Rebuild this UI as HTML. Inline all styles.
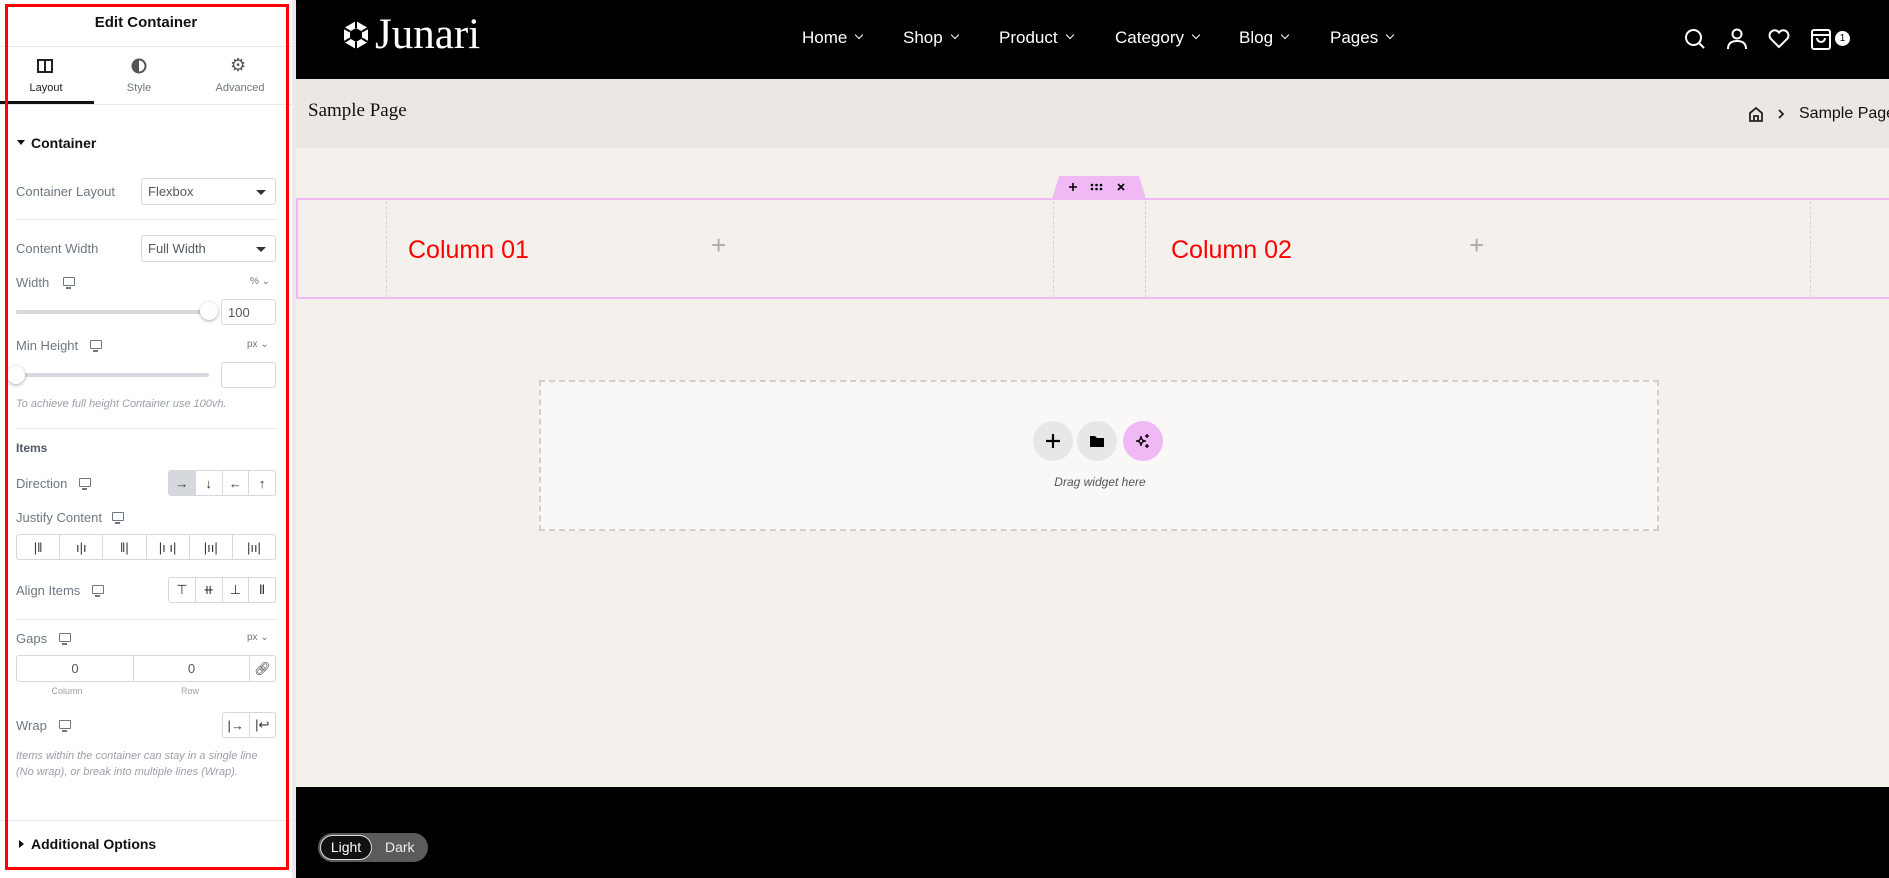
<!DOCTYPE html>
<html><head><meta charset="utf-8"><style>
*{box-sizing:border-box;margin:0;padding:0}
body{width:1889px;height:878px;overflow:hidden;position:relative;background:#f4f1ed;font-family:"Liberation Sans",sans-serif}
.a{position:absolute;white-space:nowrap}
#panel{left:0;top:0;width:292px;height:878px;background:#fff}
#gut{left:292px;top:0;width:4px;height:878px;background:#eceae8}
.red{left:5px;top:4px;width:284px;height:866px;border:3px solid #f00}
.lbl{font-size:13px;color:#6d7882}
.ln{height:1px;background:#e6e8ea;left:16px;width:260px}
.sel{border:1px solid #d5d8dc;border-radius:3px;font-size:13px;color:#515962;padding:5px 6px;background:#fff}
.sel:after{content:"";position:absolute;right:9px;top:11px;border:5px solid transparent;border-top:5px solid #333;border-bottom:0}
.inp{border:1px solid #d5d8dc;border-radius:3px;font-size:13px;color:#515962;background:#fff}
.grp{display:flex;border:1px solid #d5d8dc;border-radius:3px;overflow:hidden;background:#fff}
.grp div{flex:1;border-left:1px solid #d5d8dc;display:flex;align-items:center;justify-content:center;font-size:13px;color:#333}
.grp div:first-child{border-left:0}
.mon{width:12px;height:9px;border:1.5px solid #6d7882;border-radius:1px}
.mon:after{content:"";position:absolute;left:2px;top:9px;width:5px;height:1.5px;background:#6d7882}
.it{font-style:italic;font-size:11px;color:#9aa0a6}
.nav{color:#fff;font-size:17px;top:28px}
.nav:after{content:"";display:inline-block;width:5px;height:5px;border-right:1.6px solid #fff;border-bottom:1.6px solid #fff;transform:rotate(45deg);margin-left:9px;position:relative;top:-5px}
.dash{border-left:1px dashed #d2d2d2;top:201px;height:97px}
.col{color:#f00;font-size:25px;top:236px}
.plus{color:#a9abae;font-size:26px;top:230px}
.circ{width:40px;height:40px;border-radius:50%;background:#e6e7e8;top:421px;display:flex;align-items:center;justify-content:center}
</style></head><body>
<div class="a" id="panel"></div><div class="a" id="gut"></div>
<div class="a" style="left:0;top:14px;width:292px;text-align:center;font-weight:bold;font-size:15px;color:#111">Edit Container</div>
<div class="a" style="left:0;top:46px;width:292px;height:1px;background:#e6e8ea"></div>
<svg class="a" style="left:37px;top:59px" width="16" height="14"><rect x="1" y="1" width="14" height="12" fill="none" stroke="#222" stroke-width="2"/><line x1="8" y1="1" x2="8" y2="13" stroke="#222" stroke-width="2"/></svg>
<div class="a" style="left:0;top:82px;width:92px;text-align:center;font-size:11px;color:#222">Layout</div>
<svg class="a" style="left:131px;top:58px" width="16" height="16"><circle cx="8" cy="8" r="6.5" fill="none" stroke="#555" stroke-width="2"/><path d="M8 1.5A6.5 6.5 0 0 0 8 14.5Z" fill="#555"/></svg>
<div class="a" style="left:93px;top:82px;width:92px;text-align:center;font-size:11px;color:#6d7882">Style</div>
<div class="a" style="left:230px;top:55px;font-size:18px;color:#555">⚙</div>
<div class="a" style="left:195px;top:82px;width:90px;text-align:center;font-size:11px;color:#6d7882">Advanced</div>
<div class="a" style="left:0;top:101px;width:94px;height:3px;background:#111"></div>
<div class="a" style="left:0;top:104px;width:292px;height:1px;background:#e6e8ea"></div>
<div class="a" style="left:17px;top:140px;border:4px solid transparent;border-top:5px solid #111;border-bottom:0"></div>
<div class="a" style="left:31px;top:135px;font-weight:bold;font-size:14px;color:#111">Container</div>
<div class="a lbl" style="left:16px;top:184px">Container Layout</div>
<div class="a sel" style="left:141px;top:178px;width:135px;height:27px">Flexbox</div>
<div class="a ln" style="top:219px"></div>
<div class="a lbl" style="left:16px;top:241px">Content Width</div>
<div class="a sel" style="left:141px;top:235px;width:135px;height:27px">Full Width</div>
<div class="a lbl" style="left:16px;top:275px">Width</div><div class="a mon" style="left:63px;top:277px"></div>
<div class="a" style="left:250px;top:276px;font-size:10px;color:#6d7882">%&nbsp;⌄</div>
<div class="a" style="left:16px;top:310px;width:195px;height:4px;background:#d5d8dc;border-radius:2px"></div>
<div class="a" style="left:200px;top:302px;width:18px;height:18px;border-radius:50%;background:#fff;box-shadow:0 1px 3px rgba(0,0,0,.35)"></div>
<div class="a inp" style="left:221px;top:299px;width:55px;height:26px;padding:5px 6px">100</div>
<div class="a lbl" style="left:16px;top:338px">Min Height</div><div class="a mon" style="left:90px;top:340px"></div>
<div class="a" style="left:247px;top:339px;font-size:10px;color:#6d7882">px&nbsp;⌄</div>
<div class="a" style="left:16px;top:373px;width:193px;height:4px;background:#d5d8dc;border-radius:2px"></div>
<div class="a" style="left:7px;top:366px;width:18px;height:18px;border-radius:50%;background:#fff;box-shadow:0 1px 3px rgba(0,0,0,.35)"></div>
<div class="a inp" style="left:221px;top:362px;width:55px;height:26px"></div>
<div class="a it" style="left:16px;top:398px">To achieve full height Container use 100vh.</div>
<div class="a ln" style="top:428px"></div>
<div class="a" style="left:16px;top:441px;font-size:12px;font-weight:bold;color:#515962">Items</div>
<div class="a lbl" style="left:16px;top:476px">Direction</div><div class="a mon" style="left:79px;top:478px"></div>
<div class="a grp" style="left:168px;top:470px;width:108px;height:26px"><div style="background:#d5d8dc">→</div><div>↓</div><div>←</div><div>↑</div></div>
<div class="a lbl" style="left:16px;top:510px">Justify Content</div><div class="a mon" style="left:112px;top:512px"></div>
<div class="a grp" style="left:16px;top:534px;width:260px;height:26px;font-size:10px"><div>|‖</div><div>ı|ı</div><div>‖|</div><div>|ı ı|</div><div>|ıı|</div><div>|ıı|</div></div>
<div class="a lbl" style="left:16px;top:583px">Align Items</div><div class="a mon" style="left:92px;top:585px"></div>
<div class="a grp" style="left:168px;top:577px;width:108px;height:26px"><div>⊤</div><div>⧺</div><div>⊥</div><div>Ⅱ</div></div>
<div class="a ln" style="top:619px"></div>
<div class="a lbl" style="left:16px;top:631px">Gaps</div><div class="a mon" style="left:59px;top:633px"></div>
<div class="a" style="left:247px;top:632px;font-size:10px;color:#6d7882">px&nbsp;⌄</div>
<div class="a grp" style="left:16px;top:655px;width:260px;height:27px"><div style="flex:0 0 116px;color:#515962">0</div><div style="flex:0 0 116px;color:#515962">0</div><div>🔗︎</div></div>
<div class="a" style="left:40px;top:686px;width:54px;text-align:center;font-size:9px;color:#9aa0a6">Column</div>
<div class="a" style="left:163px;top:686px;width:54px;text-align:center;font-size:9px;color:#9aa0a6">Row</div>
<div class="a lbl" style="left:16px;top:718px">Wrap</div><div class="a mon" style="left:59px;top:720px"></div>
<div class="a grp" style="left:222px;top:712px;width:54px;height:26px"><div>|→</div><div>|↩</div></div>
<div class="a it" style="left:16px;top:748px;line-height:16px">Items within the container can stay in a single line<br>(No wrap), or break into multiple lines (Wrap).</div>
<div class="a" style="left:0;top:820px;width:292px;height:1px;background:#e6e8ea"></div>
<div class="a" style="left:19px;top:840px;border:4px solid transparent;border-left:5px solid #111;border-right:0"></div>
<div class="a" style="left:31px;top:836px;font-weight:bold;font-size:14px;color:#111">Additional Options</div>
<div class="a red"></div>
<!-- header -->
<div class="a" style="left:296px;top:0;width:1593px;height:79px;background:#000"></div>
<svg class="a" style="left:342px;top:20px" width="28" height="30" viewBox="0 0 28 30"><polygon points="14,1 26,8 26,22 14,29 2,22 2,8" fill="#fff"/><polygon points="14,8 20,11.5 20,18.5 14,22 8,18.5 8,11.5" fill="#000"/><path d="M14 1V8M26 8L20 11.5M26 22L20 18.5M14 29V22M2 22L8 18.5M2 8L8 11.5" stroke="#000" stroke-width="2"/></svg>
<div class="a" style="left:375px;top:10px;font-family:'Liberation Serif',serif;font-size:43px;color:#fff">Junari</div>
<div class="a nav" style="left:802px">Home</div><div class="a nav" style="left:903px">Shop</div><div class="a nav" style="left:999px">Product</div><div class="a nav" style="left:1115px">Category</div><div class="a nav" style="left:1239px">Blog</div><div class="a nav" style="left:1330px">Pages</div>
<svg class="a" style="left:1684px;top:28px" width="22" height="22" fill="none" stroke="#fff" stroke-width="2"><circle cx="9.5" cy="9.5" r="7.5"/><path d="M15 15l5 5"/></svg>
<svg class="a" style="left:1727px;top:28px" width="20" height="22" fill="none" stroke="#fff" stroke-width="2"><circle cx="10" cy="6" r="4.5"/><path d="M1 21c0-6 4-8 9-8s9 2 9 8"/></svg>
<svg class="a" style="left:1768px;top:29px" width="22" height="20" fill="none" stroke="#fff" stroke-width="2"><path d="M11 18L2.5 9.5A5 5 0 0 1 11 3.5A5 5 0 0 1 19.5 9.5Z"/></svg>
<svg class="a" style="left:1811px;top:28px" width="20" height="22" fill="none" stroke="#fff" stroke-width="2"><rect x="1" y="2" width="18" height="19" rx="2"/><path d="M1 7h18M6 10a4 4 0 0 0 8 0"/></svg>
<div class="a" style="left:1835px;top:31px;width:15px;height:15px;border-radius:50%;background:#fff;color:#000;font-size:10px;text-align:center;line-height:15px">1</div>
<!-- breadcrumb -->
<div class="a" style="left:296px;top:79px;width:1593px;height:69px;background:#ebe8e4"></div>
<div class="a" style="left:308px;top:100px;font-family:'Liberation Serif',serif;font-size:19px;color:#111">Sample Page</div>
<svg class="a" style="left:1748px;top:106px" width="16" height="16" fill="none" stroke="#222" stroke-width="1.8"><path d="M2 7L8 2l6 5v8H2Z M6 15v-5h4v5"/></svg>
<svg class="a" style="left:1777px;top:108px" width="8" height="12" fill="none" stroke="#222" stroke-width="1.8"><path d="M2 2l4 4-4 4"/></svg>
<div class="a" style="left:1799px;top:105px;font-size:16px;color:#111">Sample Page</div>
<!-- container -->
<div class="a" style="left:296px;top:198px;width:1593px;height:101px;border-top:2px solid #f0b8f5;border-bottom:2px solid #f0b8f5;border-left:2px solid #f0b8f5"></div>
<svg class="a" style="left:1052px;top:176px" width="94" height="23"><path d="M7 0H87L94 23H0Z" fill="#f0b8f5"/><path d="M17 11h8M21 7v8" stroke="#000" stroke-width="1.6"/><g fill="#000"><circle cx="40" cy="9" r="1.3"/><circle cx="44.5" cy="9" r="1.3"/><circle cx="49" cy="9" r="1.3"/><circle cx="40" cy="13" r="1.3"/><circle cx="44.5" cy="13" r="1.3"/><circle cx="49" cy="13" r="1.3"/></g><path d="M66 8l6 6M72 8l-6 6" stroke="#000" stroke-width="1.6"/></svg>
<div class="a dash" style="left:386px"></div><div class="a dash" style="left:1053px"></div><div class="a dash" style="left:1145px"></div><div class="a dash" style="left:1810px"></div>
<div class="a col" style="left:408px">Column 01</div><div class="a plus" style="left:711px">+</div>
<div class="a col" style="left:1171px">Column 02</div><div class="a plus" style="left:1469px">+</div>
<!-- drop zone -->
<div class="a" style="left:539px;top:380px;width:1120px;height:151px;border:2px dashed #d0d0d0;background:#f9f8f6"></div>
<div class="a circ" style="left:1033px"><svg width="16" height="16"><path d="M8 1v14M1 8h14" stroke="#000" stroke-width="2.2"/></svg></div>
<div class="a circ" style="left:1077px"><svg width="16" height="14"><path d="M1 2h5l2 2h7v9H1Z" fill="#000"/></svg></div>
<div class="a circ" style="left:1123px;background:#f0b8f5"><svg width="18" height="18"><path d="M7 4Q7 9 2 9Q7 9 7 14Q7 9 12 9Q7 9 7 4Z" fill="none" stroke="#000" stroke-width="1.3"/><path d="M13 2v4M11 4h4M13 12v4M11 14h4" stroke="#000" stroke-width="1.3"/></svg></div>
<div class="a" style="left:1000px;top:475px;width:200px;text-align:center;font-style:italic;font-size:12px;color:#555">Drag widget here</div>
<!-- footer -->
<div class="a" style="left:296px;top:787px;width:1593px;height:91px;background:#000"></div>
<div class="a" style="left:318px;top:833px;width:110px;height:29px;border-radius:15px;background:#5b5b5b"></div>
<div class="a" style="left:320px;top:835px;width:52px;height:25px;border-radius:13px;background:#111;border:1.5px solid #ddd;color:#fff;font-size:14px;text-align:center;line-height:22px">Light</div>
<div class="a" style="left:385px;top:839px;color:#eee;font-size:14px">Dark</div>
</body></html>
